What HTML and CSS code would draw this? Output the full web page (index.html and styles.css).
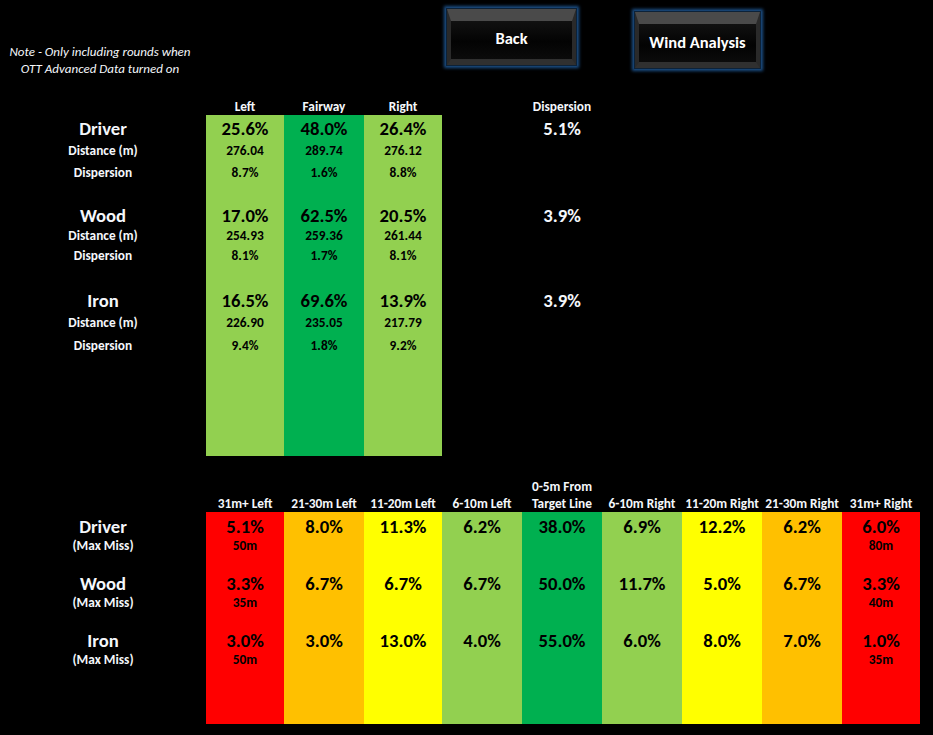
FILE: index.html
```html
<!DOCTYPE html>
<html>
<head>
<meta charset="utf-8">
<link rel="stylesheet" href="styles.css">
</head>
<body>
<div class="header">
  <div class="note">Note - Only including rounds when<br>OTT Advanced Data turned on</div>
  <div class="btn btn-back">Back</div>
  <div class="btn btn-wind">Wind Analysis</div>
</div>

<div class="section-top">
  <div class="labels">
    <div class="colhead"></div>
    <div class="tbody">
      <div class="big">Driver</div><div>Distance (m)</div><div>Dispersion</div><div></div>
      <div class="big">Wood</div><div>Distance (m)</div><div>Dispersion</div><div></div>
      <div class="big">Iron</div><div>Distance (m)</div><div>Dispersion</div>
    </div>
  </div>
  <div class="col w78">
    <div class="colhead">Left</div>
    <div class="tbody lg dark">
      <div class="big">25.6%</div><div>276.04</div><div>8.7%</div><div></div>
      <div class="big">17.0%</div><div>254.93</div><div>8.1%</div><div></div>
      <div class="big">16.5%</div><div>226.90</div><div>9.4%</div>
    </div>
  </div>
  <div class="col w80">
    <div class="colhead">Fairway</div>
    <div class="tbody dg dark">
      <div class="big">48.0%</div><div>289.74</div><div>1.6%</div><div></div>
      <div class="big">62.5%</div><div>259.36</div><div>1.7%</div><div></div>
      <div class="big">69.6%</div><div>235.05</div><div>1.8%</div>
    </div>
  </div>
  <div class="col w78">
    <div class="colhead">Right</div>
    <div class="tbody lg dark">
      <div class="big">26.4%</div><div>276.12</div><div>8.8%</div><div></div>
      <div class="big">20.5%</div><div>261.44</div><div>8.1%</div><div></div>
      <div class="big">13.9%</div><div>217.79</div><div>9.2%</div>
    </div>
  </div>
  <div class="col w80 disp">
    <div class="colhead">Dispersion</div>
    <div class="tbody">
      <div class="big">5.1%</div><div></div><div></div><div></div>
      <div class="big">3.9%</div><div></div><div></div><div></div>
      <div class="big">3.9%</div><div></div><div></div>
    </div>
  </div>
</div>

<div class="section-bottom">
  <div class="labels">
    <div class="bhead"></div>
    <div class="bbody">
      <div class="grp"><div class="big">Driver</div><div class="sub">(Max Miss)</div></div>
      <div class="grp"><div class="big">Wood</div><div class="sub">(Max Miss)</div></div>
      <div class="grp"><div class="big">Iron</div><div class="sub">(Max Miss)</div></div>
    </div>
  </div>
  <div class="col w78">
    <div class="bhead">31m+ Left</div>
    <div class="bbody red dark">
      <div class="grp"><div class="big">5.1%</div><div class="sub">50m</div></div>
      <div class="grp"><div class="big">3.3%</div><div class="sub">35m</div></div>
      <div class="grp"><div class="big">3.0%</div><div class="sub">50m</div></div>
    </div>
  </div>
  <div class="col w80">
    <div class="bhead">21-30m Left</div>
    <div class="bbody org dark">
      <div class="grp"><div class="big">8.0%</div></div>
      <div class="grp"><div class="big">6.7%</div></div>
      <div class="grp"><div class="big">3.0%</div></div>
    </div>
  </div>
  <div class="col w78">
    <div class="bhead">11-20m Left</div>
    <div class="bbody yel dark">
      <div class="grp"><div class="big">11.3%</div></div>
      <div class="grp"><div class="big">6.7%</div></div>
      <div class="grp"><div class="big">13.0%</div></div>
    </div>
  </div>
  <div class="col w80">
    <div class="bhead">6-10m Left</div>
    <div class="bbody lg dark">
      <div class="grp"><div class="big">6.2%</div></div>
      <div class="grp"><div class="big">6.7%</div></div>
      <div class="grp"><div class="big">4.0%</div></div>
    </div>
  </div>
  <div class="col w80">
    <div class="bhead">0-5m From<br>Target Line</div>
    <div class="bbody dg dark">
      <div class="grp"><div class="big">38.0%</div></div>
      <div class="grp"><div class="big">50.0%</div></div>
      <div class="grp"><div class="big">55.0%</div></div>
    </div>
  </div>
  <div class="col w80">
    <div class="bhead">6-10m Right</div>
    <div class="bbody lg dark">
      <div class="grp"><div class="big">6.9%</div></div>
      <div class="grp"><div class="big">11.7%</div></div>
      <div class="grp"><div class="big">6.0%</div></div>
    </div>
  </div>
  <div class="col w80">
    <div class="bhead">11-20m Right</div>
    <div class="bbody yel dark">
      <div class="grp"><div class="big">12.2%</div></div>
      <div class="grp"><div class="big">5.0%</div></div>
      <div class="grp"><div class="big">8.0%</div></div>
    </div>
  </div>
  <div class="col w80">
    <div class="bhead">21-30m Right</div>
    <div class="bbody org dark">
      <div class="grp"><div class="big">6.2%</div></div>
      <div class="grp"><div class="big">6.7%</div></div>
      <div class="grp"><div class="big">7.0%</div></div>
    </div>
  </div>
  <div class="col w78">
    <div class="bhead">31m+ Right</div>
    <div class="bbody red dark">
      <div class="grp"><div class="big">6.0%</div><div class="sub">80m</div></div>
      <div class="grp"><div class="big">3.3%</div><div class="sub">40m</div></div>
      <div class="grp"><div class="big">1.0%</div><div class="sub">35m</div></div>
    </div>
  </div>
</div>
</body>
</html>
```

FILE: styles.css
```css
html, body {
  margin: 0;
  padding: 0;
}
body {
  background: #000;
  color: #f4f7fb;
  font-family: Carlito, Lato, "Liberation Sans", sans-serif;
  font-weight: 700;
  font-size: 13.33px;
  width: 933px;
  height: 735px;
  overflow: hidden;
}

/* header */
.header {
  display: flex;
  align-items: flex-start;
  height: 98px;
}
.note {
  width: 200px;
  padding-top: 43px;
  font-style: italic;
  font-weight: 400;
  font-size: 13px;
  line-height: 17px;
  text-align: center;
  white-space: nowrap;
}
.btn {
  box-sizing: border-box;
  display: flex;
  align-items: center;
  justify-content: center;
  font-size: 16.5px;
  color: #fff;
  background: linear-gradient(#111, #030303 55%, #0b0b0b);
  border-style: solid;
  border-width: 12px 4px 6px 4px;
  border-color: #4a4a4a #2a2a2a #303030 #2a2a2a;
  box-shadow: 0 0 0 1px #0d2238, 0 0 3px 3px #1c4f86;
  padding-bottom: 4px;
}
.btn-back {
  margin-left: 247px;
  margin-top: 9px;
  width: 129px;
  height: 56px;
}
.btn-wind {
  margin-left: 59px;
  margin-top: 12px;
  width: 125px;
  height: 56px;
  padding-bottom: 3px;
}

/* shared columns */
.section-top,
.section-bottom {
  display: flex;
  padding-left: 63px;
}
.labels {
  width: 80px;
  margin-right: 63px;
}
.w78 { width: 78px; }
.w80 { width: 80px; }
.disp { margin-left: 80px; }

.big { font-size: 18.67px; }
.dark { color: #000; }

.lg { background: #92d050; }
.dg { background: #00b050; }
.red { background: #ff0000; }
.org { background: #ffc000; }
.yel { background: #ffff00; }

/* top table */
.section-top {
  height: 358px;
}
.colhead {
  height: 17px;
  line-height: 17px;
  text-align: center;
  white-space: nowrap;
}
.tbody {
  height: 341px;
  display: grid;
  grid-template-rows: 26px 18px 26px 18px 24px 16px 24px 21px 24px 20px 26px 1fr;
}
.tbody > div {
  display: flex;
  align-items: center;
  justify-content: center;
  white-space: nowrap;
}

/* bottom table */
.section-bottom {
  height: 268px;
}
.bhead {
  height: 56px;
  display: flex;
  align-items: flex-end;
  justify-content: center;
  text-align: center;
  line-height: 17px;
  white-space: nowrap;
}
.bbody {
  height: 212px;
}
.grp {
  height: 57px;
  box-sizing: border-box;
  padding-top: 5px;
  text-align: center;
  white-space: nowrap;
}
.grp .big {
  line-height: 20px;
}
.grp .sub {
  line-height: 18px;
}
```
